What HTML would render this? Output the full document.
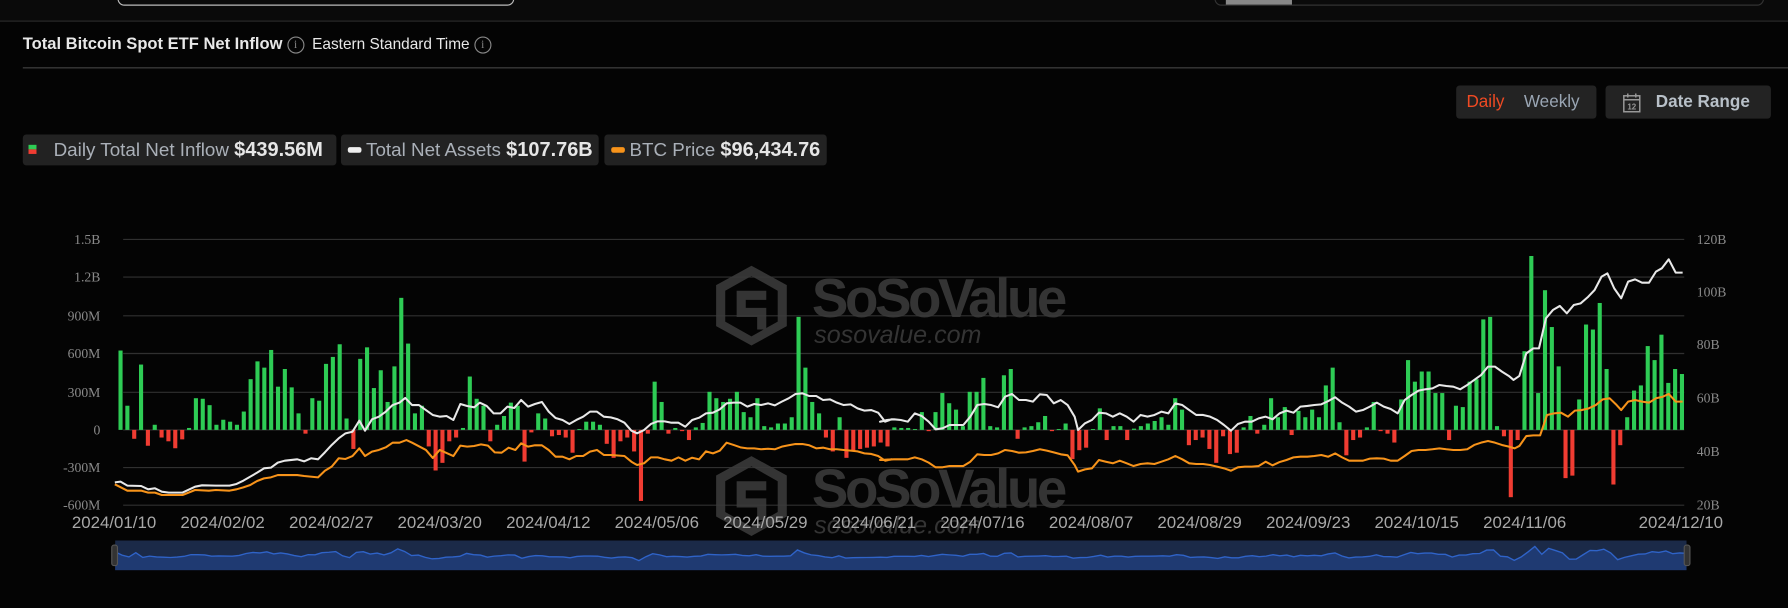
<!DOCTYPE html>
<html><head><meta charset="utf-8"><style>
html,body{margin:0;padding:0;background:#040404;width:1788px;height:608px;overflow:hidden}
#w{position:absolute;left:0;top:0;width:1568px;height:533px;transform:scale(1.14031);transform-origin:0 0;font-family:"Liberation Sans",sans-serif;color:#ddd}
.a{position:absolute}
.chip{position:absolute;top:118px;height:27px;background:#222;border-radius:3px;font-size:16.5px;line-height:27px;color:#aab0b8;white-space:nowrap}
.chip b{color:#e6e6e6;font-size:17.5px}
.info{display:inline-block;width:13px;height:13px;border:1px solid #888;border-radius:50%;color:#888;font-size:10px;line-height:13px;text-align:center;font-weight:normal;vertical-align:middle;font-family:"Liberation Serif",serif}
</style></head><body><div id="w">
<div class="a" style="left:0;top:0;width:1568px;height:18px;background:#0a0a0a;border-bottom:1px solid #2a2a2a"></div>
<div class="a" style="left:103px;top:-10px;width:346px;height:13px;border:1px solid #bbb;border-radius:6px"></div>
<div class="a" style="left:1065px;top:-10px;width:480px;height:13px;border:1px solid #333;border-radius:6px"></div>
<div class="a" style="left:1075px;top:0;width:58px;height:4px;background:#888"></div>
<div class="a" style="left:20px;top:31px;font-size:14.5px;font-weight:bold;color:#e8e8e8">Total Bitcoin Spot ETF Net Inflow <span class="info">i</span> <span style="font-weight:normal;font-size:13.5px;margin-left:3px">Eastern Standard Time</span> <span class="info">i</span></div>
<div class="a" style="left:20px;top:59px;width:1548px;height:1px;background:#444"></div>
<div class="a" style="left:1277px;top:75px;width:123px;height:29px;background:#232323;border-radius:3px;font-size:15px;line-height:29px"><span style="color:#f04a23;margin-left:9px">Daily</span><span style="color:#9aa6b4;margin-left:17px">Weekly</span></div>
<div class="a" style="left:1408px;top:75px;width:145px;height:29px;background:#232323;border-radius:3px;font-size:15px;line-height:29px;font-weight:bold;color:#b8c0c8">
<svg class="a" style="left:15px;top:6px" width="16" height="18" viewBox="0 0 16 18"><rect x="1" y="3" width="14" height="14" fill="none" stroke="#999" stroke-width="1.3"/><line x1="1" y1="6.5" x2="15" y2="6.5" stroke="#999" stroke-width="1.3"/><line x1="4.5" y1="1" x2="4.5" y2="4.5" stroke="#999" stroke-width="1.3"/><line x1="11.5" y1="1" x2="11.5" y2="4.5" stroke="#999" stroke-width="1.3"/><text x="8" y="15" font-size="7" fill="#999" text-anchor="middle" font-family="Liberation Sans">12</text></svg>
<span style="margin-left:44px">Date Range</span></div>
<div class="chip" style="left:20px;width:275px"><span class="a" style="left:5px;top:9px;width:7px;height:4px;background:#2ecc55"></span><span class="a" style="left:5px;top:13px;width:7px;height:4px;background:#f03c32"></span><span style="margin-left:27px">Daily Total Net Inflow </span><b>$439.56M</b></div>
<div class="chip" style="left:299px;width:226px"><span class="a" style="left:6px;top:11px;width:12px;height:5px;border-radius:2px;background:#eee"></span><span style="margin-left:22px">Total Net Assets </span><b>$107.76B</b></div>
<div class="chip" style="left:530px;width:195px"><span class="a" style="left:6px;top:11px;width:12px;height:5px;border-radius:2px;background:#f7931a"></span><span style="margin-left:22px">BTC Price </span><b>$96,434.76</b></div>
<svg class="a" style="left:0;top:0" width="1568" height="533" id="ch"></svg>
</div>
<script>
var S=document.getElementById('ch'),h='';
var g=[['1.5B',210],['1.2B',243],['900M',277],['600M',310],['300M',344],['0',377],['-300M',410],['-600M',443]];
g.forEach(function(a){h+='<line x1="108" x2="1477" y1="'+a[1]+'" y2="'+a[1]+'" stroke="#303030" stroke-width="1"/><text x="88" y="'+(a[1]+4)+'" fill="#8a8a8a" font-size="12" text-anchor="end" font-family="Liberation Serif">'+a[0]+'</text>';});
[['120B',210],['100B',256],['80B',302],['60B',349],['40B',396],['20B',443]].forEach(function(a){h+='<text x="1488" y="'+(a[1]+4)+'" fill="#8a8a8a" font-size="12" font-family="Liberation Serif">'+a[0]+'</text>';});
function wm(y){return '<g fill="#3a3a3a" opacity="0.9"><path d="M659,'+y+' l31,17 v36 l-31,17 l-31,-17 v-36z M659,'+(y+9)+' l-23,13 v27 l23,13 l23,-13 v-27z" fill-rule="evenodd"/><path d="M646,'+(y+22)+' h26 v8 h-18 v7 h18 v19 h-8 v-11 h-18 z"/><text x="712" y="'+(y+45)+'" font-size="48" font-weight="bold" letter-spacing="-3" font-family="Liberation Sans">SoSoValue</text><text x="714" y="'+(y+68)+'" font-size="22" font-style="italic" font-family="Liberation Sans">sosovalue.com</text></g>';}
h+=wm(233)+wm(400);
var v=[625,190,-70,515,-125,40,-60,-90,-145,-75,15,250,245,195,40,80,65,40,145,400,540,490,630,340,480,335,130,-30,250,230,520,575,675,90,-150,560,650,330,470,220,500,1040,680,130,190,-130,-320,-260,-90,-60,15,420,245,190,-90,40,110,215,190,-250,-20,130,90,-50,-40,-60,-180,0,65,65,40,-110,-220,-90,-60,-170,-560,-30,380,220,-30,15,-10,-80,20,55,300,250,220,245,300,140,100,250,30,20,50,50,100,890,490,220,130,-60,-170,100,-220,-170,-150,-140,-130,-100,-130,
20,15,15,0,140,-10,140,290,210,160,30,300,300,410,30,20,430,480,-70,20,30,60,110,-10,0,50,-230,-160,-140,0,170,-80,30,30,-80,10,30,50,70,100,40,250,160,-120,-80,-60,-150,-260,-50,-190,-180,20,110,-30,40,250,100,180,-40,150,100,160,100,350,490,60,-200,-80,-60,20,220,-10,-30,-100,240,550,380,460,460,290,290,-80,190,180,380,400,870,890,30,-50,-530,-80,620,1370,290,1100,810,500,-380,-360,240,830,790,1000,480,-430,-120,100,310,350,660,550,750,370,480,440];
var n=v.length,x0=105.7,x1=1475,dx=(x1-x0)/(n-1);
v.forEach(function(d,i){var x=x0+i*dx,hh=Math.abs(d)/300*33.4;if(hh<0.8)hh=0.8;var y=d>=0?377-hh:377;h+='<rect x="'+(x-1.8).toFixed(1)+'" y="'+y.toFixed(1)+'" width="3.6" height="'+hh.toFixed(1)+'" fill="'+(d>=0?'#2ecc55':'#f03c32')+'"/>';});
function cv(a,b,off,f){var p=[];for(var i=0;i<a.length;i+=2)p.push(((off+a[i]*f)/1.14031).toFixed(1)+','+((220+a[i+1]/3)/1.14031).toFixed(1));return p;}
var w3=[200,787,210,785,222,797,246,798,258,808,270,805,282,815,294,818,318,818,340,800,352,796,376,797,400,797,412,792,424,782,436,770,448,758,460,745,472,743,484,728,496,722,518,718,530,724,542,715,554,718,566,697,578,675,590,655,602,640,614,635,626,602,636,632,648,598,660,590,672,575,684,555,696,548,706,534,718,555,730,555,742,570,754,585,766,590,778,588,790,600,802,552,814,558,826,562,836,548,848,558,860,580,872,580,884,560,896,564,908,540,920,560,932,552,944,546,956,575,968,594,980,600,992,612,1004,600,1016,590,1028,575,1040,575,1052,590,1064,592,1076,598,1088,608,1100,632,1110,640,1122,630,1134,612,1146,604,1158,604,1170,608,1182,608,1194,620,1206,600,1218,593,1230,580,1242,578,1254,568,1266,550,1278,548,1290,548,1302,560,1314,552,1326,555,1338,550,1350,556,1362,545,1374,535,1386,522,1398,520,1410,528,1422,528,1434,540,1446,538,1458,548,1470,555,1482,553,1494,565,1506,572,1518,570,1530,578,1542,605,1554,598];
var w4=[0,605,12,600,24,598,36,600,48,605,60,580,72,588,84,605,96,628,108,625,120,615,144,615,156,590,168,555,180,552,192,555,204,562,216,530,228,522,240,540,252,540,264,545,276,523,288,525,300,550,312,540,324,555,336,590,342,630,354,610,366,600,378,578,390,580,402,590,414,580,426,590,438,605,450,585,462,590,474,585,486,575,498,580,510,550,522,555,534,570,546,585,558,585,570,590,582,600,594,615,606,632,618,612,630,605,642,605,654,595,666,590,678,598,690,580,702,572,714,578,726,560,738,558,750,555,762,553,774,543,786,532,798,548,810,560,822,575,834,570,846,560,858,548,870,560,882,567,894,580,906,540,918,525,930,512,942,508,954,505,966,495,978,498,990,500,1002,508,1014,495,1026,480,1038,465,1050,440,1062,440,1074,455,1086,468,1094,480,1104,468,1116,400,1128,385,1138,385,1150,295,1162,270,1174,258,1186,280,1198,255,1210,250,1222,232,1234,210,1246,170,1256,160,1268,205,1280,235,1292,185,1304,178,1316,188,1328,188,1340,155,1350,145,1362,118,1374,158,1386,158];
var o3=[200,793,222,812,246,812,258,818,270,818,282,825,318,825,340,810,364,812,376,810,400,812,412,808,424,802,436,795,448,783,460,775,472,772,484,765,518,765,530,768,554,772,566,752,578,740,590,715,602,717,614,708,626,685,636,708,648,695,660,690,672,682,684,668,696,668,708,660,718,668,742,690,754,714,766,690,790,708,802,677,814,680,826,678,838,673,850,677,862,697,874,698,886,683,898,690,908,670,920,680,932,676,944,676,956,690,968,710,980,710,992,718,1004,708,1016,708,1028,695,1040,690,1052,705,1064,705,1088,708,1100,725,1110,735,1122,730,1134,712,1146,712,1158,718,1170,722,1182,712,1194,722,1206,713,1218,718,1230,694,1242,700,1254,692,1266,668,1278,675,1290,682,1302,685,1314,685,1326,688,1338,686,1350,688,1362,680,1374,676,1386,672,1398,672,1410,676,1422,685,1434,683,1446,688,1458,688,1470,690,1482,692,1494,694,1506,700,1518,702,1530,708,1542,722,1554,718];
var o4=[0,720,24,718,48,718,60,712,72,718,84,728,96,742,108,742,120,738,144,738,156,725,168,703,180,705,192,705,204,700,216,690,228,693,240,698,252,697,264,693,276,688,288,692,300,697,312,703,324,706,336,735,342,755,354,748,366,745,378,720,390,725,402,730,414,722,426,730,438,738,450,732,462,730,474,732,486,725,498,718,510,708,522,718,534,730,546,732,558,732,570,735,582,740,594,745,606,752,618,742,630,740,642,740,654,738,666,725,678,736,690,726,702,720,714,712,726,710,738,710,750,708,762,705,774,710,786,700,798,712,810,722,822,722,834,722,846,716,858,715,870,716,882,722,894,722,906,708,918,693,930,690,942,690,954,688,966,685,978,688,990,690,1002,690,1014,688,1026,675,1038,668,1050,663,1062,668,1074,675,1086,680,1096,685,1104,678,1116,648,1128,646,1140,646,1152,585,1164,580,1176,578,1188,590,1200,572,1212,570,1224,565,1236,555,1248,538,1260,535,1272,555,1280,570,1292,545,1304,540,1316,545,1328,548,1340,535,1352,530,1362,522,1374,545,1386,545];
var W=cv(w3,0,0,900/1568).concat(cv(w4,0,880,908/1568)),O=cv(o3,0,0,900/1568).concat(cv(o4,0,880,908/1568));
h+='<polyline points="'+O.join(' ')+'" fill="none" stroke="#f7931a" stroke-width="1.8" stroke-linejoin="round"/>';
h+='<polyline points="'+W.join(' ')+'" fill="none" stroke="#e8e8e8" stroke-width="1.8" stroke-linejoin="round"/>';
var xl=['2024/01/10','2024/02/02','2024/02/27','2024/03/20','2024/04/12','2024/05/06','2024/05/29','2024/06/21','2024/07/16','2024/08/07','2024/08/29','2024/09/23','2024/10/15','2024/11/06'];
xl.forEach(function(t,i){h+='<text x="'+(63+i*95.2)+'" y="463" fill="#a8a8a8" font-size="14.8" font-family="Liberation Sans">'+t+'</text>';});
h+='<text x="1437" y="463" fill="#a8a8a8" font-size="14.8" font-family="Liberation Sans">2024/12/10</text>';
h+='<rect x="101" y="474" width="1378" height="26" fill="#1b2a48"/>';
var np=['101,500'];v.forEach(function(d,i){np.push((101+i*1378/(n-1)).toFixed(1)+','+(488-d/1400*9).toFixed(1));});np.push('1479,500');
h+='<polygon points="'+np.join(' ')+'" fill="#1f3a72"/><polyline points="'+np.slice(1,-1).join(' ')+'" fill="none" stroke="#2f63c8" stroke-width="1.2"/>';
h+='<rect x="98" y="478" width="5" height="18" rx="2" fill="#333" stroke="#555"/><rect x="1477" y="478" width="5" height="18" rx="2" fill="#333" stroke="#555"/>';
S.innerHTML=h;
</script>
</body></html>
